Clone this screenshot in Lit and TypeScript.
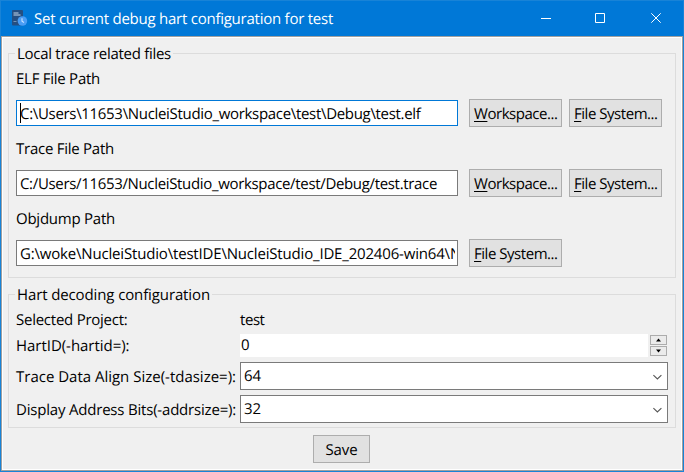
import { LitElement, html, css, svg } from "lit";
import { customElement, property } from "lit/decorators.js";

/** A run of text whose tracking is adjusted so that it spans `span` pixels. */
@customElement("ui-text")
class UiText extends LitElement {
  static styles = css`
    :host { display: block; white-space: pre; }
    .t { display: inline-block; height: 20px; line-height: 20px; }
    .key { text-decoration: underline; text-decoration-thickness: 1px; text-underline-offset: 2px; text-decoration-skip-ink: none; }
  `;
  @property() text = "";
  @property({ type: Number }) span = 0;
  @property({ type: Boolean }) mnemonic = false;

  render() {
    const t = this.text;
    return this.mnemonic
      ? html`<span class="t"><span class="key">${t[0]}</span>${t.slice(1)}</span>`
      : html`<span class="t">${t}</span>`;
  }
  firstUpdated() {
    const el = this.renderRoot.querySelector(".t") as HTMLElement;
    const natural = el.getBoundingClientRect().width;
    if (this.span) el.style.letterSpacing = (this.span - natural) / this.text.length + "px";
  }
}

@customElement("ui-button")
class UiButton extends LitElement {
  static styles = css`
    :host { display: flex; box-sizing: border-box; width: 93px; height: 28px; padding: 4px 0 0 4px;
      border: 1px solid #adadad; background: #e1e1e1; }
    :host([narrow]) { width: 57px; padding-left: 12px; }
  `;
  @property() label = "";
  @property({ type: Number }) span = 0;
  @property({ type: Boolean }) mnemonic = false;
  render() {
    return html`<ui-text .text=${this.label} .span=${this.span} ?mnemonic=${this.mnemonic}></ui-text>`;
  }
}

@customElement("ui-combo")
class UiCombo extends LitElement {
  static styles = css`
    :host { display: flex; justify-content: space-between; box-sizing: border-box; width: 428px; height: 28px;
      padding: 3px 4px 0 3px; border: 1px solid #7a7a7a; background: #fff; }
    .chevron { width: 11px; height: 7px; margin-top: 8px; fill: none; stroke: #555; stroke-width: 1.1; }
  `;
  @property() value = "";
  render() {
    return html`<ui-text .text=${this.value} .span=${17}></ui-text>
      <svg class="chevron" viewBox="0 0 11 7">${svg`<path d="M1.4 1.2 5.4 5 9.4 1.2"/>`}</svg>`;
  }
}

interface PathRow { label: string; labelSpan: number; value: string; span: number; focused?: boolean; workspace?: boolean; }

const rows: PathRow[] = [
  { label: "ELF File Path", labelSpan: 84, value: "C:\\Users\\11653\\NucleiStudio_workspace\\test\\Debug\\test.elf", span: 400.5, focused: true, workspace: true },
  { label: "Trace File Path", labelSpan: 98, value: "C:/Users/11653/NucleiStudio_workspace/test/Debug/test.trace", span: 417, workspace: true },
  { label: "Objdump Path", labelSpan: 99, value: "G:\\woke\\NucleiStudio\\testIDE\\NucleiStudio_IDE_202406-win64\\N", span: 441 },
];

@customElement("app-root")
class AppRoot extends LitElement {
  static styles = css`
    :host { display: block; width: 684px; height: 472px; font: 15px "Open Sans", "Noto Sans", sans-serif;
      color: #000; text-rendering: geometricPrecision; }
    .window { display: flex; flex-direction: column; box-sizing: border-box; height: 472px; background: #0078d7;
      border: 1px solid #1883d7; }
    .bar { display: flex; height: 35px; flex: none; color: #fff; }
    .icon { width: 18px; height: 18px; margin: 8px 6px 0 9px; }
    .title { margin-top: 8px; flex: 1; }
    .controls { width: 150px; height: 35px; fill: none; stroke: #fff; }
    .client { flex: 1; box-sizing: border-box; border: 1px solid #a0a0a0; background: #f0f0f0;
      box-shadow: inset 0 0 0 1px #fff; padding: 8px 6px 0; display: flex; flex-direction: column; }
    .group { position: relative; box-sizing: border-box; width: 668px; border: 1px solid #dcdcdc; flex: none; }
    .files { height: 225px; margin-top: 8px; padding: 15px 0 0 7px; }
    .hart { height: 134px; margin-top: 16px; padding: 15px 0 0 7px; }
    .legend { position: absolute; top: -10px; left: 6px; padding: 0 2px; background: #f0f0f0; }
    .row { height: 70px; }
    .fields { display: flex; margin-top: 10px; }
    .input { box-sizing: border-box; width: 442px; height: 26px; margin: 1px 11px 0 0; border: 1px solid #7a7a7a;
      background: #fff; padding: 3px 2px 0 3px; display: flex; }
    .clip { overflow: hidden; flex: 1; height: 21px; }
    .focused { border-color: #0078d7; position: relative; }
    .caret { position: absolute; left: 3px; top: 2px; width: 1px; height: 20px; background: #000; }
    .second { margin-left: 7px; }
    .form { display: grid; grid-template-columns: 224px 428px; grid-template-rows: 24px 28px 33px 28px; }
    .l2 { margin-top: 2px; }
    .l3 { margin-top: 5px; }
    .spin { display: flex; height: 23px; }
    .value { width: 408px; box-sizing: border-box; padding: 1px 0 0 1px; margin-right: 2px; background: #fff; }
    .steps { display: grid; grid-template-rows: 10px 10px; gap: 1px; padding-top: 1px; }
    .step { box-sizing: border-box; width: 17px; height: 10px; border: 1px solid #acacac; background: #ebebeb; display: block; }
    .save { align-self: center; margin: 7px 2px 0 0; }
  `;

  render() {
    return html`<div class="window">
      <div class="bar">
        <svg class="icon" viewBox="0 0 18 18">
          <rect x="2" y="1" width="11" height="15.5" rx="1" fill="#254f82"/>
          <path d="M3.5 4h5M3.5 6h7" stroke="#c8d9ea" stroke-width="1"/>
          <path d="M3.5 12.5h3" stroke="#7596b8"/>
          <circle cx="12.4" cy="12" r="4.8" fill="#4a9df5"/>
          <path d="M12 9.3v3l2 1.2" fill="none" stroke="#c9e3ff" stroke-width="1.1"/>
        </svg>
        <ui-text class="title" .text=${"Set current debug hart configuration for test"} .span=${299}></ui-text>
        <svg class="controls" viewBox="0 0 150 35">
          <path d="M8 17.5h10M62.5 12.5h9v9h-9z"/>
          <path d="M118.3 12.3l9.4 9.4M127.7 12.3l-9.4 9.4"/>
        </svg>
      </div>
      <div class="client">
        <div class="group files">
          <ui-text class="legend" .text=${"Local trace related files"} .span=${154}></ui-text>
          ${rows.map((r) => html`<div class="row">
            <ui-text .text=${r.label} .span=${r.labelSpan}></ui-text>
            <div class="fields">
              <div class="input ${r.focused ? "focused" : ""}">
                ${r.focused ? html`<div class="caret"></div>` : ""}
                <div class="clip"><ui-text .text=${r.value} .span=${r.span}></ui-text></div>
              </div>
              ${r.workspace ? html`<ui-button label="Workspace..." .span=${83.5} mnemonic></ui-button>` : ""}
              <ui-button class=${r.workspace ? "second" : ""} label="File System..." .span=${83.5} mnemonic></ui-button>
            </div>
          </div>`)}
        </div>
        <div class="group hart">
          <ui-text class="legend" .text=${"Hart decoding configuration"} .span=${193}></ui-text>
          <div class="form">
            <ui-text .text=${"Selected Project:"} .span=${111.5}></ui-text>
            <ui-text .text=${"test"} .span=${24.5}></ui-text>
            <ui-text class="l2" .text=${"HartID(-hartid=):"} .span=${113.5}></ui-text>
            <div class="spin">
              <div class="value"><ui-text .text=${"0"} .span=${8.5}></ui-text></div>
              <div class="steps">
                <svg class="step" viewBox="0 0 15 8"><path d="M5 5.5h5L7.5 2.5z"/></svg>
                <svg class="step" viewBox="0 0 15 8"><path d="M5 2.5h5L7.5 5.5z"/></svg>
              </div>
            </div>
            <ui-text class="l3" .text=${"Trace Data Align Size(-tdasize=):"} .span=${220}></ui-text>
            <ui-combo value="64"></ui-combo>
            <ui-text class="l3" .text=${"Display Address Bits(-addrsize=):"} .span=${220}></ui-text>
            <ui-combo value="32"></ui-combo>
          </div>
        </div>
        <ui-button class="save" narrow label="Save" .span=${32}></ui-button>
      </div>
    </div>`;
  }
}
